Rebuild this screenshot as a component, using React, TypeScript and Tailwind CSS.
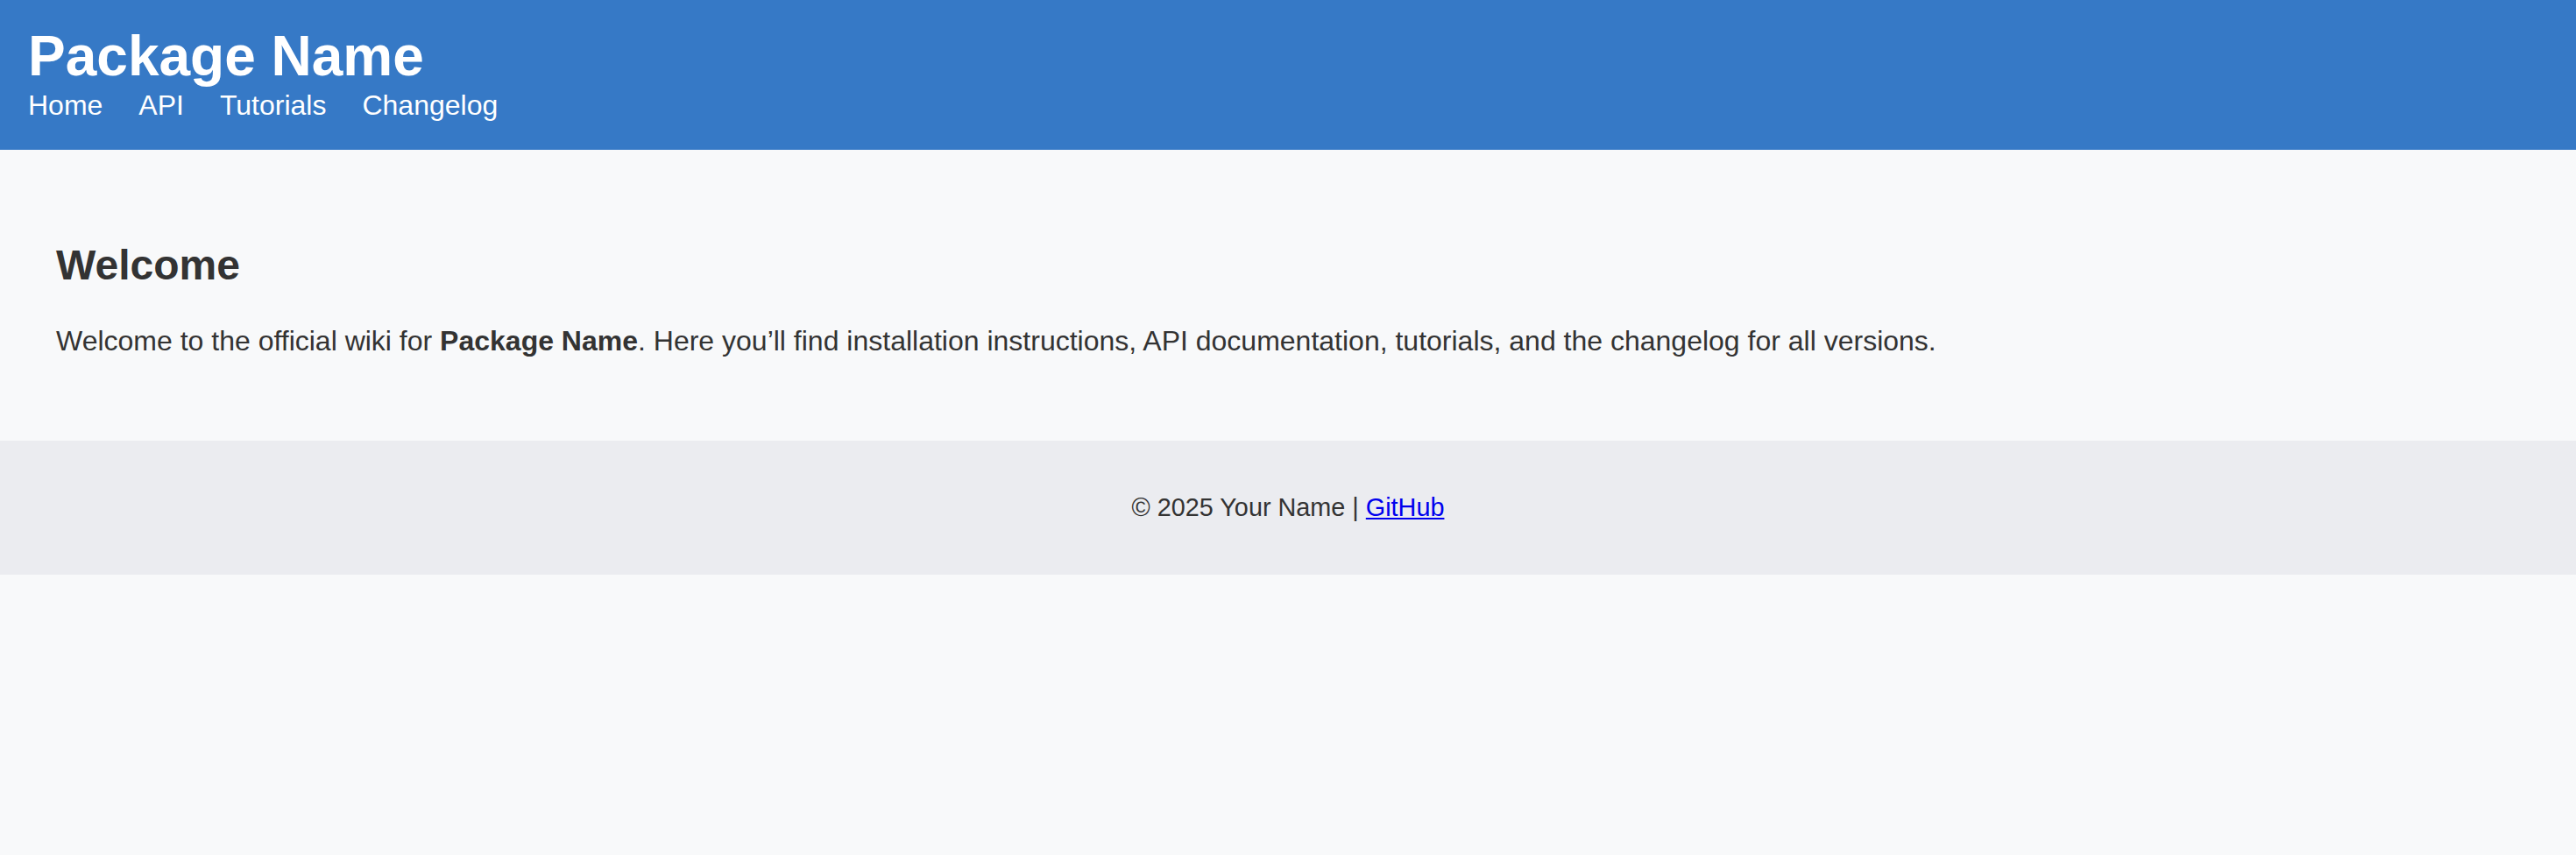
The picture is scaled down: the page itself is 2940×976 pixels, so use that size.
const navLinks = ["Home", "API", "Tutorials", "Changelog"];

export default function App() {
  return (
    <div className="min-h-[976px] bg-[#f8f9fa] font-['Liberation_Sans',Arial,sans-serif] text-[#333333]">
      <header className="bg-[#3679c6] pl-[32px] pr-8 pt-[28px] pb-[33px] text-white">
        <h1 className="text-[64px] font-bold leading-[1.15]">Package Name</h1>
        <nav className="flex gap-[41px] text-[32px] leading-[1.15]">
          {navLinks.map((link) => (
            <a key={link} href="#" className="text-white">
              {link}
            </a>
          ))}
        </nav>
      </header>

      <main className="px-16 pt-[64px] pb-[64px]">
        <h2 className="mt-[40px] mb-[40px] text-[48px] font-bold leading-[1.15]">Welcome</h2>
        <p className="mb-[32px] text-[32px] leading-[1.15]">
          Welcome to the official wiki for <strong className="font-bold">Package Name</strong>. Here you’ll find
          installation instructions, API documentation, tutorials, and the changelog for all versions.
        </p>
      </main>

      <footer className="bg-[#ebecf0] py-[60px] text-center text-[28.8px] leading-[1.15]">
        © 2025 Your Name |{" "}
        <a href="#" className="text-[#0000ee] underline">
          GitHub
        </a>
      </footer>
    </div>
  );
}
